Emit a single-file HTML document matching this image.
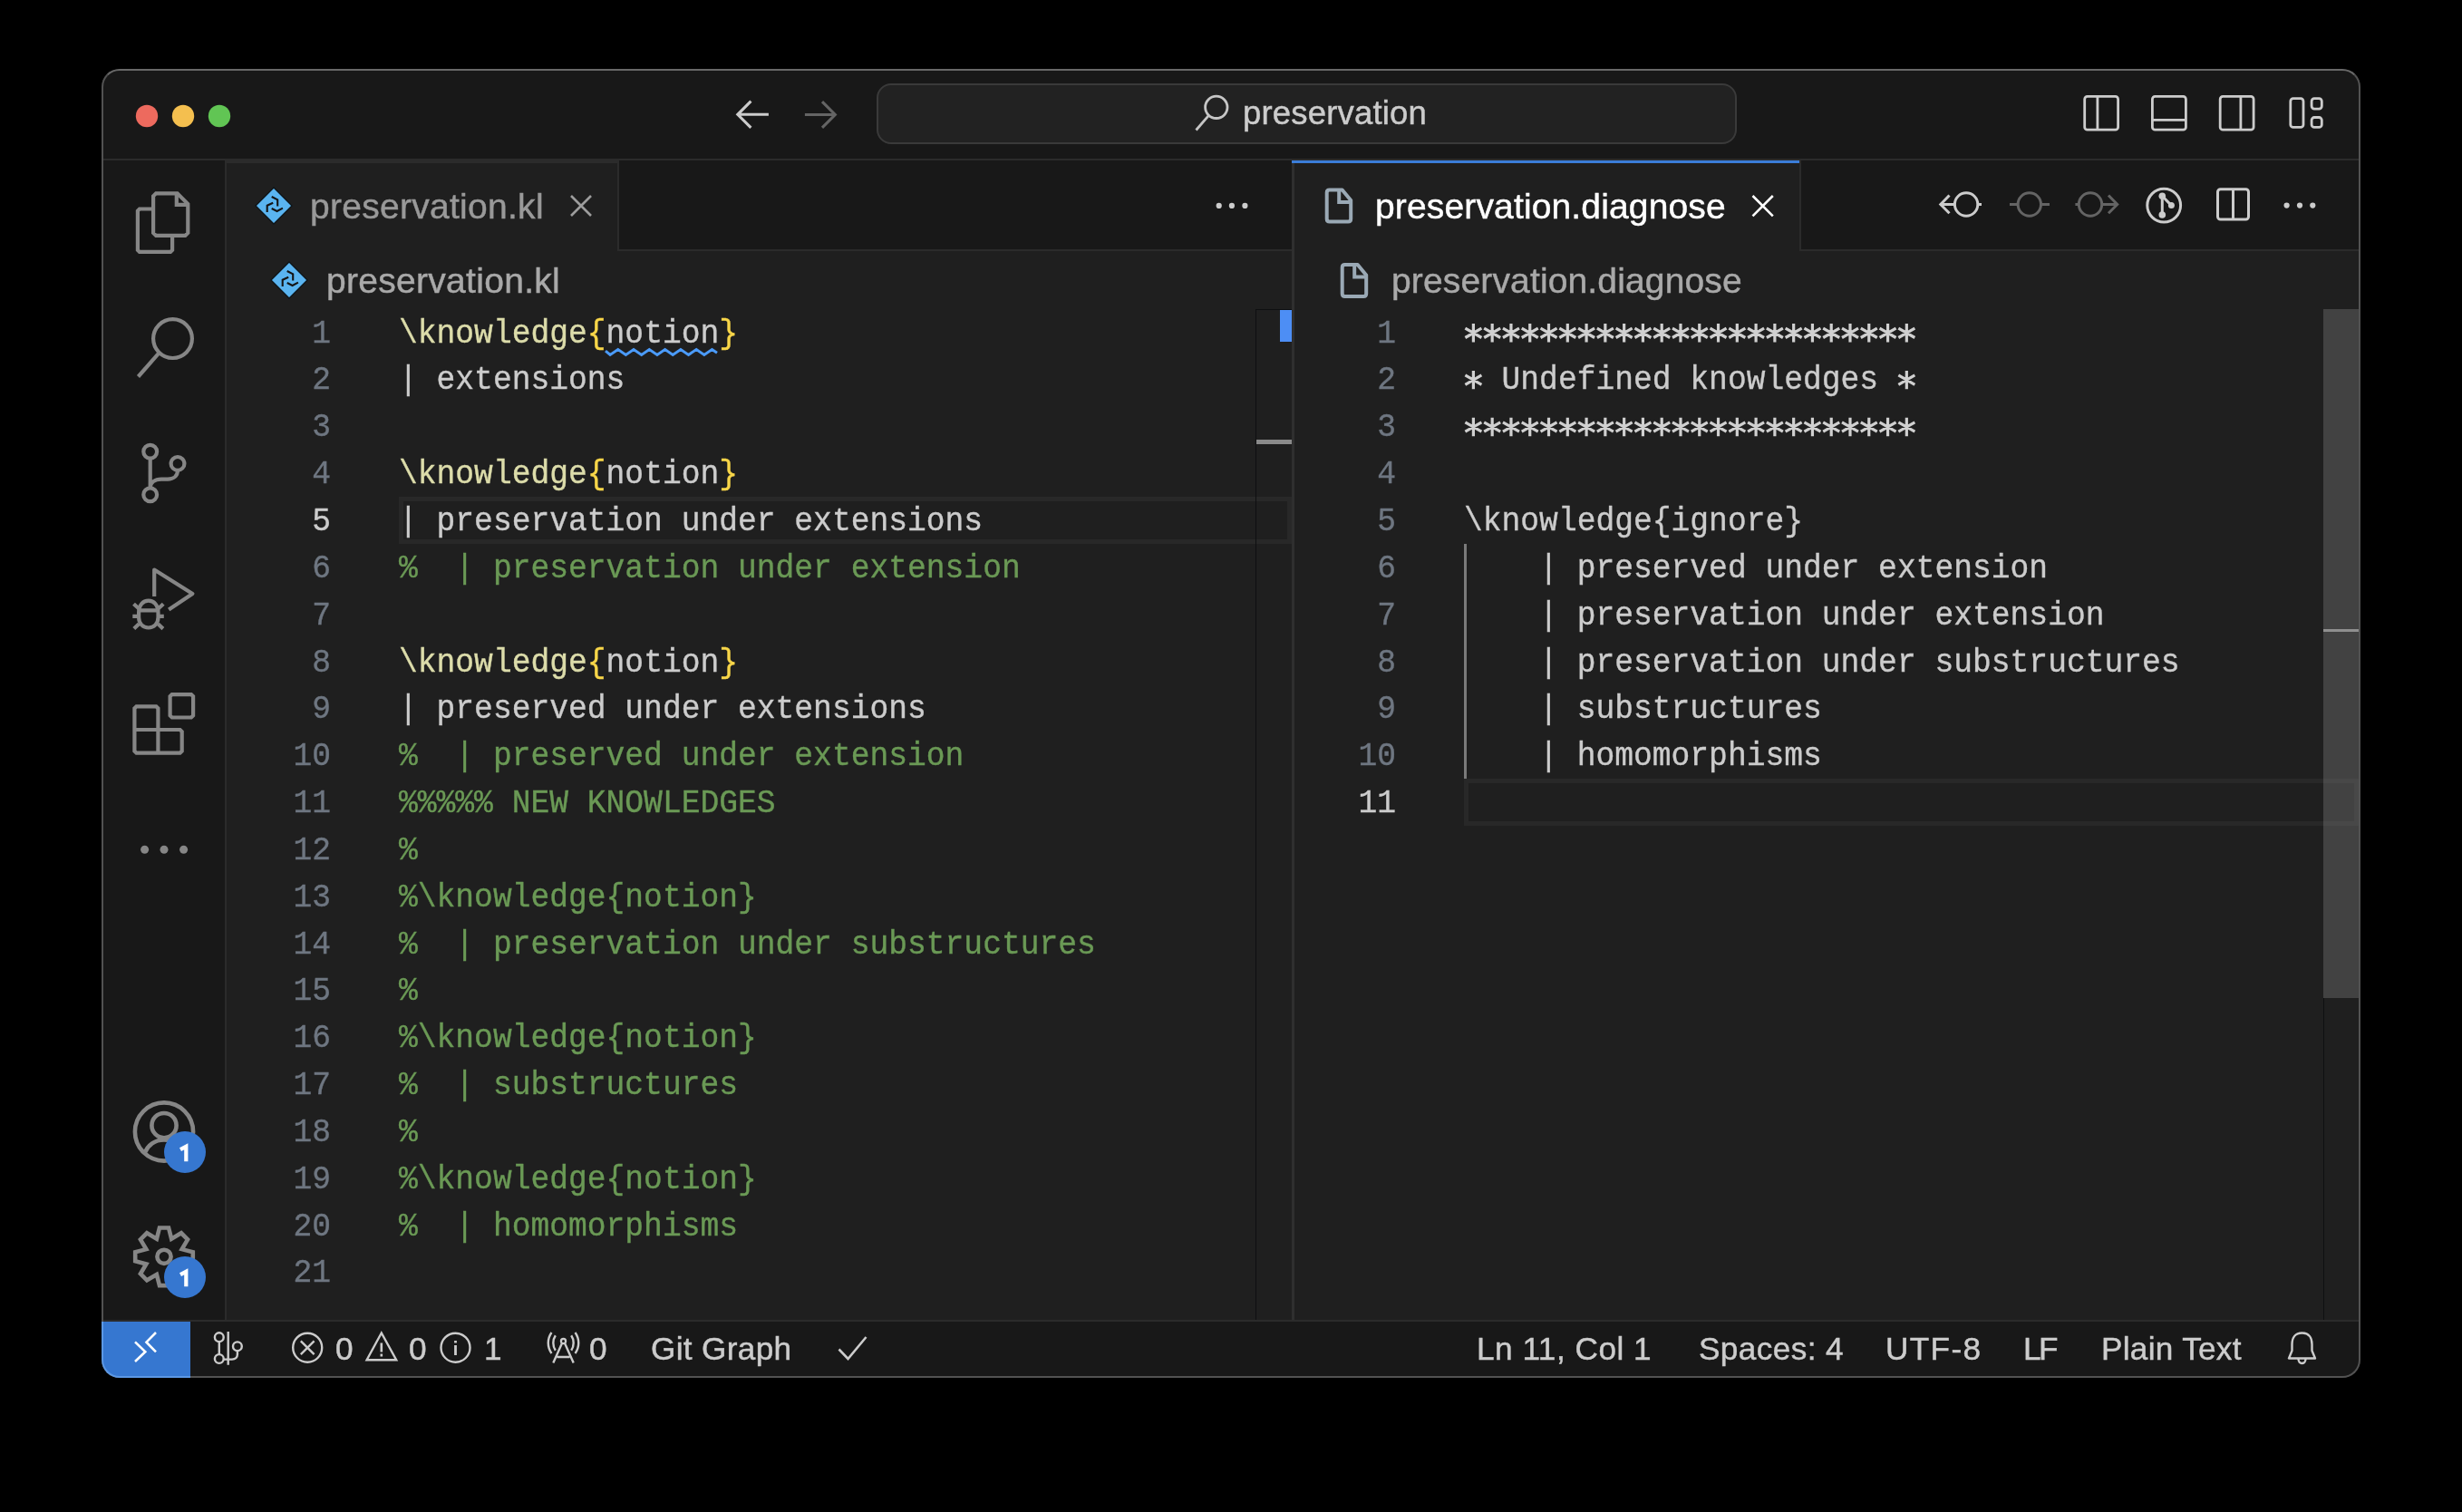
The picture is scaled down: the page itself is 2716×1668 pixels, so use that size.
<!DOCTYPE html>
<html><head><meta charset="utf-8">
<style>
html,body{margin:0;padding:0;background:#000;width:2716px;height:1668px;overflow:hidden;}
body{position:relative;font-family:"Liberation Sans",sans-serif;}
.r{position:absolute;}
.t{position:absolute;white-space:pre;-webkit-text-stroke:0.45px currentColor;}
#win{position:absolute;left:112px;top:76px;width:2492px;height:1444px;border-radius:20px;background:#181818;overflow:hidden;}
#winborder{position:absolute;left:112px;top:76px;width:2488px;height:1440px;border-radius:20px;border:2px solid #525252;border-top-color:#686868;z-index:50;}
.code{position:absolute;white-space:normal;font-family:"Liberation Mono",monospace;font-size:34.63px;transform-origin:0 0;transform:scaleY(1.08);-webkit-text-stroke:0.35px currentColor;}
.code div{height:48.009px;line-height:48.009px;white-space:pre;}
.ln{position:absolute;font-family:"Liberation Mono",monospace;font-size:34.63px;transform-origin:0 0;transform:scaleY(1.08);text-align:right;color:#6e7681;-webkit-text-stroke:0.35px currentColor;}
.ln div{height:48.009px;line-height:48.009px;}
.fn{color:#dcdcaa}.br{color:#f8d649}.tx{color:#cccccc}.cm{color:#6a9955}
.ast{display:inline-block;width:20.78px;text-align:center;}
#ov{position:absolute;left:0;top:0;z-index:60;}
.t,.code,.ln{will-change:transform;}
</style></head>
<body>
<div id="win"></div>
<div class="r" style="left:114px;top:175px;width:2488px;height:2px;background:#2b2b2b;"></div>
<div class="r" style="left:967px;top:92px;width:949px;height:67px;background:#222222;box-sizing:border-box;border:2px solid #3a3a3a;border-radius:16px;"></div>
<div class="r" style="left:248px;top:177px;width:2px;height:1279px;background:#2b2b2b;"></div>
<div class="r" style="left:250px;top:177px;width:1175px;height:98px;background:#181818;"></div>
<div class="r" style="left:250px;top:275px;width:1175px;height:2px;background:#2b2b2b;"></div>
<div class="r" style="left:250px;top:177px;width:431px;height:100px;background:#1f1f1f;"></div>
<div class="r" style="left:681px;top:177px;width:2px;height:100px;background:#2b2b2b;"></div>
<div class="r" style="left:250px;top:177px;width:431px;height:3px;background:#2b2b2b;"></div>
<div class="r" style="left:250px;top:277px;width:1175px;height:1179px;background:#1f1f1f;"></div>
<div class="r" style="left:1425px;top:177px;width:3px;height:1279px;background:#2f2f2f;"></div>
<div class="r" style="left:1428px;top:177px;width:1174px;height:98px;background:#181818;"></div>
<div class="r" style="left:1428px;top:275px;width:1174px;height:2px;background:#2b2b2b;"></div>
<div class="r" style="left:1428px;top:177px;width:557px;height:100px;background:#1f1f1f;"></div>
<div class="r" style="left:1425px;top:177px;width:560px;height:3px;background:#3b7dd8;"></div>
<div class="r" style="left:1985px;top:177px;width:2px;height:100px;background:#2b2b2b;"></div>
<div class="r" style="left:1428px;top:277px;width:1174px;height:1179px;background:#1f1f1f;"></div>
<div class="r" style="left:440px;top:548px;width:985px;height:52px;background:transparent;box-sizing:border-box;border:5px solid #282828;"></div>
<div class="r" style="left:1615px;top:859px;width:987px;height:52px;background:transparent;box-sizing:border-box;border:5px solid #282828;"></div>
<div class="r" style="left:1615px;top:600px;width:3px;height:259px;background:#7a7a7a;"></div>
<div class="r" style="left:1385px;top:341px;width:1px;height:1115px;background:#0e0f11;"></div>
<div class="r" style="left:1385px;top:341px;width:40px;height:1px;background:#0e0f11;"></div>
<div class="r" style="left:1412px;top:342px;width:13px;height:35px;background:#4d8ef5;"></div>
<div class="r" style="left:1386px;top:485px;width:39px;height:5px;background:#8a8a8a;"></div>
<div class="r" style="left:2563px;top:1101px;width:1px;height:355px;background:#0e0f11;"></div>
<div class="r" style="left:2563px;top:341px;width:39px;height:760px;background:rgba(121,121,121,0.4);"></div>
<div class="r" style="left:2563px;top:694px;width:39px;height:3px;background:#8f8f8f;"></div>
<div class="r" style="left:114px;top:1456px;width:2488px;height:2px;background:#2b2b2b;"></div>
<div class="r" style="left:114px;top:1458px;width:2488px;height:60px;background:#181818;border-bottom-left-radius:18px;border-bottom-right-radius:18px;"></div>
<div id="winborder"></div>
<div class="r" style="left:112px;top:1458px;width:98px;height:62px;background:#3677d0;box-sizing:border-box;border-left:2px solid #5c98e4;border-bottom:2px solid #5c98e4;border-bottom-left-radius:20px;z-index:55;"></div>
<div class="ln" style="left:265px;top:341.6px;width:100.00px;"><div>1</div><div>2</div><div>3</div><div>4</div><div style="color:#cccccc">5</div><div>6</div><div>7</div><div>8</div><div>9</div><div>10</div><div>11</div><div>12</div><div>13</div><div>14</div><div>15</div><div>16</div><div>17</div><div>18</div><div>19</div><div>20</div><div>21</div></div>
<div class="code" style="left:440px;top:341.9px;"><div><span class="fn">\knowledge</span><span class="br">{</span><span class="tx">notion</span><span class="br">}</span></div><div><span class="tx">| extensions</span></div><div> </div><div><span class="fn">\knowledge</span><span class="br">{</span><span class="tx">notion</span><span class="br">}</span></div><div><span class="tx">| preservation under extensions</span></div><div><span class="cm">%  | preservation under extension</span></div><div> </div><div><span class="fn">\knowledge</span><span class="br">{</span><span class="tx">notion</span><span class="br">}</span></div><div><span class="tx">| preserved under extensions</span></div><div><span class="cm">%  | preserved under extension</span></div><div><span class="cm">%%%%% NEW KNOWLEDGES</span></div><div><span class="cm">%</span></div><div><span class="cm">%\knowledge{notion}</span></div><div><span class="cm">%  | preservation under substructures</span></div><div><span class="cm">%</span></div><div><span class="cm">%\knowledge{notion}</span></div><div><span class="cm">%  | substructures</span></div><div><span class="cm">%</span></div><div><span class="cm">%\knowledge{notion}</span></div><div><span class="cm">%  | homomorphisms</span></div><div> </div></div>
<div class="ln" style="left:1440px;top:341.6px;width:100.00px;"><div>1</div><div>2</div><div>3</div><div>4</div><div>5</div><div>6</div><div>7</div><div>8</div><div>9</div><div>10</div><div style="color:#cccccc">11</div></div>
<div class="code tx" style="left:1615px;top:341.9px;"><div>                        </div><div>  Undefined knowledges  </div><div>                        </div><div> </div><div>\knowledge{ignore}</div><div>    | preserved under extension</div><div>    | preservation under extension</div><div>    | preservation under substructures</div><div>    | substructures</div><div>    | homomorphisms</div><div> </div></div>
<div class="t" style="left:1371.11px;top:107.10px;font-size:36.50px;line-height:36.50px;letter-spacing:0.177px;color:#cccccc;font-family:"Liberation Sans",sans-serif;font-weight:normal;">preservation</div>
<div class="t" style="left:342.27px;top:207.98px;font-size:39.00px;line-height:39.00px;letter-spacing:0.281px;color:#999999;font-family:"Liberation Sans",sans-serif;font-weight:normal;">preservation.kl</div>
<div class="t" style="left:1517.27px;top:208.18px;font-size:39.00px;line-height:39.00px;letter-spacing:0.146px;color:#ffffff;font-family:"Liberation Sans",sans-serif;font-weight:normal;">preservation.diagnose</div>
<div class="t" style="left:359.73px;top:289.88px;font-size:39.00px;line-height:39.00px;letter-spacing:0.296px;color:#a9a9a9;font-family:"Liberation Sans",sans-serif;font-weight:normal;">preservation.kl</div>
<div class="t" style="left:1534.61px;top:289.88px;font-size:39.00px;line-height:39.00px;letter-spacing:0.146px;color:#a9a9a9;font-family:"Liberation Sans",sans-serif;font-weight:normal;">preservation.diagnose</div>
<div class="t" style="left:369.62px;top:1470.20px;font-size:35.20px;line-height:35.20px;color:#cccccc;">0</div>
<div class="t" style="left:451.43px;top:1470.20px;font-size:35.20px;line-height:35.20px;color:#cccccc;">0</div>
<div class="t" style="left:533.92px;top:1470.20px;font-size:35.20px;line-height:35.20px;color:#cccccc;">1</div>
<div class="t" style="left:650.23px;top:1470.20px;font-size:35.20px;line-height:35.20px;color:#cccccc;">0</div>
<div class="t" style="left:718.13px;top:1470.20px;font-size:35.20px;line-height:35.20px;letter-spacing:0.331px;color:#cccccc;font-family:"Liberation Sans",sans-serif;font-weight:normal;">Git Graph</div>
<div class="t" style="left:1629.35px;top:1470.20px;font-size:35.20px;line-height:35.20px;letter-spacing:0.499px;color:#cccccc;font-family:"Liberation Sans",sans-serif;font-weight:normal;">Ln 11, Col 1</div>
<div class="t" style="left:1873.98px;top:1470.20px;font-size:35.20px;line-height:35.20px;letter-spacing:0.381px;color:#cccccc;font-family:"Liberation Sans",sans-serif;font-weight:normal;">Spaces: 4</div>
<div class="t" style="left:2080.18px;top:1470.20px;font-size:35.20px;line-height:35.20px;letter-spacing:1.346px;color:#cccccc;font-family:"Liberation Sans",sans-serif;font-weight:normal;">UTF-8</div>
<div class="t" style="left:2231.91px;top:1470.20px;font-size:35.20px;line-height:35.20px;letter-spacing:-2.601px;color:#cccccc;font-family:"Liberation Sans",sans-serif;font-weight:normal;">LF</div>
<div class="t" style="left:2317.81px;top:1470.20px;font-size:35.20px;line-height:35.20px;letter-spacing:0.291px;color:#cccccc;font-family:"Liberation Sans",sans-serif;font-weight:normal;">Plain Text</div>
<svg id="ov" width="2716" height="1668" viewBox="0 0 2716 1668" fill="none" stroke-linecap="butt" stroke-linejoin="miter">
<circle cx="162" cy="128" r="12.2" fill="#ed6a5e"/>
<circle cx="202" cy="128" r="12.2" fill="#f4bf4f"/>
<circle cx="242" cy="128" r="12.2" fill="#61c554"/>
<path d="M847.9 126.3H815M828.4 111.7L813.8 126.3L828.4 140.9" stroke="#cccccc" stroke-width="3.1"/>
<path d="M887.9 126.5H921M907 112.2L921.3 126.5L907 140.8" stroke="#646464" stroke-width="3.1"/>
<circle cx="1341.8" cy="118.3" r="12.2" stroke="#c6c6c6" stroke-width="2.8"/><path d="M1333.2 127.6L1319.5 143.5" stroke="#c6c6c6" stroke-width="2.8"/>
<rect x="2299.7" y="106.4" width="36.9" height="36.8" rx="3" stroke="#cccccc" stroke-width="2.8"/><path d="M2313.9 106.4V143.2" stroke="#cccccc" stroke-width="2.8"/>
<rect x="2374.4" y="106.4" width="37" height="36.8" rx="3" stroke="#cccccc" stroke-width="2.8"/><path d="M2374.4 132.4H2411.4" stroke="#cccccc" stroke-width="2.8"/>
<rect x="2449.2" y="106.4" width="36.9" height="36.8" rx="3" stroke="#cccccc" stroke-width="2.8"/><path d="M2471.9 106.4V143.2" stroke="#cccccc" stroke-width="2.8"/>
<rect x="2526.8" y="108.7" width="14.2" height="31.7" rx="3" stroke="#cccccc" stroke-width="2.8"/>
<rect x="2550.1" y="108.7" width="11.2" height="11.4" rx="3" stroke="#cccccc" stroke-width="2.8"/>
<rect x="2550.1" y="129.5" width="11.2" height="10.9" rx="3" stroke="#cccccc" stroke-width="2.8"/>
<path d="M172.1 213.3H195.6L207.3 225V256.9L204.3 259.9H172.1L169.1 256.9V216.3Z" stroke="#868686" stroke-width="4.2"/>
<path d="M194.8 213.3V225.9H207.3" stroke="#868686" stroke-width="4.2"/>
<path d="M169.1 230.5H153.9L151.9 232.5V275.9L153.9 277.9H188.1L190.1 275.9V259.9" stroke="#868686" stroke-width="4.2"/>
<circle cx="190.5" cy="373.6" r="21.4" stroke="#868686" stroke-width="4.2"/><path d="M175.4 389.4L152.5 415.5" stroke="#868686" stroke-width="4.2"/>
<circle cx="165.7" cy="498.2" r="7.4" stroke="#868686" stroke-width="4.2"/><circle cx="196" cy="511.4" r="7.4" stroke="#868686" stroke-width="4.2"/><circle cx="165.7" cy="545.8" r="7.4" stroke="#868686" stroke-width="4.2"/>
<path d="M165.7 505.6V538.4M196 518.8C196 525 191.5 528.6 185 528.6H178C171 528.6 165.7 532 165.7 538.4" stroke="#868686" stroke-width="4.2"/>
<path d="M170.2 658V628.5L212.4 655L186.2 672.6" stroke="#868686" stroke-width="4.2" stroke-linejoin="round"/>
<path d="M153.1 676C153.1 667.5 157.8 662.7 163.8 662.7C169.8 662.7 174.5 667.5 174.5 676V681C174.5 688 169.8 692.5 163.8 692.5C157.8 692.5 153.1 688 153.1 681Z" stroke="#868686" stroke-width="4.2"/>
<path d="M153.1 673.4H174.5M147.5 666.2L153.3 671.5M180.2 666.2L174.5 671.5M146.3 679.9H153.1M174.5 679.9H180.8M147.8 693.6L153.3 688.3M179.9 693.6L174.3 688.3" stroke="#868686" stroke-width="4.2"/>
<path d="M150.5 779.3H172.3L174.4 781.4V805H198.6L200.7 807.1V828.6L198.6 830.7H150.5L148.4 828.6V781.4Z M148.4 805H174.4V830.7" stroke="#868686" stroke-width="4.2"/>
<path d="M189.7 766.1H211L213.1 768.2V789.4L211 791.5H189.7L187.6 789.4V768.2Z" stroke="#868686" stroke-width="4.2"/>
<circle cx="159.6" cy="937.3" r="4.5" fill="#868686"/><circle cx="181" cy="937.3" r="4.5" fill="#868686"/><circle cx="202.6" cy="937.3" r="4.5" fill="#868686"/>
<circle cx="181" cy="1248.5" r="32.1" stroke="#868686" stroke-width="4.6"/><circle cx="181" cy="1241.6" r="13.6" stroke="#868686" stroke-width="4.6"/>
<path d="M159.8 1272C163 1263 171 1257.5 181 1257.5C191 1257.5 199 1263 202.2 1272" stroke="#868686" stroke-width="4.6"/>
<path d="M172.85 1366.62L175.96 1354.50L186.04 1354.50L189.15 1366.62L199.93 1360.25L207.05 1367.37L200.68 1378.15L212.80 1381.26L212.80 1391.34L200.68 1394.45L207.05 1405.23L199.93 1412.35L189.15 1405.98L186.04 1418.10L175.96 1418.10L172.85 1405.98L162.07 1412.35L154.95 1405.23L161.32 1394.45L149.20 1391.34L149.20 1381.26L161.32 1378.15L154.95 1367.37L162.07 1360.25Z" stroke="#868686" stroke-width="4.6" stroke-linejoin="miter" stroke-miterlimit="10"/>
<circle cx="181" cy="1386.3" r="7.6" stroke="#868686" stroke-width="4.6"/>
<circle cx="204" cy="1271" r="23" fill="#3677d0"/><circle cx="204" cy="1409" r="23" fill="#3677d0"/>
<path d="M199.0 1268.2L205.3 1264.8V1281.2M199.0 1406.2L205.3 1402.8V1419.2" stroke="#ffffff" stroke-width="4.2" stroke-linejoin="miter"/>
<path d="M1625.40 357.10V377.50M1616.40 362.10L1634.40 372.50M1616.40 372.50L1634.40 362.10M1646.18 357.10V377.50M1637.18 362.10L1655.18 372.50M1637.18 372.50L1655.18 362.10M1666.96 357.10V377.50M1657.96 362.10L1675.96 372.50M1657.96 372.50L1675.96 362.10M1687.74 357.10V377.50M1678.74 362.10L1696.74 372.50M1678.74 372.50L1696.74 362.10M1708.52 357.10V377.50M1699.52 362.10L1717.52 372.50M1699.52 372.50L1717.52 362.10M1729.30 357.10V377.50M1720.30 362.10L1738.30 372.50M1720.30 372.50L1738.30 362.10M1750.08 357.10V377.50M1741.08 362.10L1759.08 372.50M1741.08 372.50L1759.08 362.10M1770.86 357.10V377.50M1761.86 362.10L1779.86 372.50M1761.86 372.50L1779.86 362.10M1791.64 357.10V377.50M1782.64 362.10L1800.64 372.50M1782.64 372.50L1800.64 362.10M1812.42 357.10V377.50M1803.42 362.10L1821.42 372.50M1803.42 372.50L1821.42 362.10M1833.20 357.10V377.50M1824.20 362.10L1842.20 372.50M1824.20 372.50L1842.20 362.10M1853.98 357.10V377.50M1844.98 362.10L1862.98 372.50M1844.98 372.50L1862.98 362.10M1874.76 357.10V377.50M1865.76 362.10L1883.76 372.50M1865.76 372.50L1883.76 362.10M1895.54 357.10V377.50M1886.54 362.10L1904.54 372.50M1886.54 372.50L1904.54 362.10M1916.32 357.10V377.50M1907.32 362.10L1925.32 372.50M1907.32 372.50L1925.32 362.10M1937.10 357.10V377.50M1928.10 362.10L1946.10 372.50M1928.10 372.50L1946.10 362.10M1957.88 357.10V377.50M1948.88 362.10L1966.88 372.50M1948.88 372.50L1966.88 362.10M1978.66 357.10V377.50M1969.66 362.10L1987.66 372.50M1969.66 372.50L1987.66 362.10M1999.44 357.10V377.50M1990.44 362.10L2008.44 372.50M1990.44 372.50L2008.44 362.10M2020.22 357.10V377.50M2011.22 362.10L2029.22 372.50M2011.22 372.50L2029.22 362.10M2041.00 357.10V377.50M2032.00 362.10L2050.00 372.50M2032.00 372.50L2050.00 362.10M2061.78 357.10V377.50M2052.78 362.10L2070.78 372.50M2052.78 372.50L2070.78 362.10M2082.56 357.10V377.50M2073.56 362.10L2091.56 372.50M2073.56 372.50L2091.56 362.10M2103.34 357.10V377.50M2094.34 362.10L2112.34 372.50M2094.34 372.50L2112.34 362.10M1625.40 408.95V429.35M1616.40 413.95L1634.40 424.35M1616.40 424.35L1634.40 413.95M2103.34 408.95V429.35M2094.34 413.95L2112.34 424.35M2094.34 424.35L2112.34 413.95M1625.40 460.80V481.20M1616.40 465.80L1634.40 476.20M1616.40 476.20L1634.40 465.80M1646.18 460.80V481.20M1637.18 465.80L1655.18 476.20M1637.18 476.20L1655.18 465.80M1666.96 460.80V481.20M1657.96 465.80L1675.96 476.20M1657.96 476.20L1675.96 465.80M1687.74 460.80V481.20M1678.74 465.80L1696.74 476.20M1678.74 476.20L1696.74 465.80M1708.52 460.80V481.20M1699.52 465.80L1717.52 476.20M1699.52 476.20L1717.52 465.80M1729.30 460.80V481.20M1720.30 465.80L1738.30 476.20M1720.30 476.20L1738.30 465.80M1750.08 460.80V481.20M1741.08 465.80L1759.08 476.20M1741.08 476.20L1759.08 465.80M1770.86 460.80V481.20M1761.86 465.80L1779.86 476.20M1761.86 476.20L1779.86 465.80M1791.64 460.80V481.20M1782.64 465.80L1800.64 476.20M1782.64 476.20L1800.64 465.80M1812.42 460.80V481.20M1803.42 465.80L1821.42 476.20M1803.42 476.20L1821.42 465.80M1833.20 460.80V481.20M1824.20 465.80L1842.20 476.20M1824.20 476.20L1842.20 465.80M1853.98 460.80V481.20M1844.98 465.80L1862.98 476.20M1844.98 476.20L1862.98 465.80M1874.76 460.80V481.20M1865.76 465.80L1883.76 476.20M1865.76 476.20L1883.76 465.80M1895.54 460.80V481.20M1886.54 465.80L1904.54 476.20M1886.54 476.20L1904.54 465.80M1916.32 460.80V481.20M1907.32 465.80L1925.32 476.20M1907.32 476.20L1925.32 465.80M1937.10 460.80V481.20M1928.10 465.80L1946.10 476.20M1928.10 476.20L1946.10 465.80M1957.88 460.80V481.20M1948.88 465.80L1966.88 476.20M1948.88 476.20L1966.88 465.80M1978.66 460.80V481.20M1969.66 465.80L1987.66 476.20M1969.66 476.20L1987.66 465.80M1999.44 460.80V481.20M1990.44 465.80L2008.44 476.20M1990.44 476.20L2008.44 465.80M2020.22 460.80V481.20M2011.22 465.80L2029.22 476.20M2011.22 476.20L2029.22 465.80M2041.00 460.80V481.20M2032.00 465.80L2050.00 476.20M2032.00 476.20L2050.00 465.80M2061.78 460.80V481.20M2052.78 465.80L2070.78 476.20M2052.78 476.20L2070.78 465.80M2082.56 460.80V481.20M2073.56 465.80L2091.56 476.20M2073.56 476.20L2091.56 465.80M2103.34 460.80V481.20M2094.34 465.80L2112.34 476.20M2094.34 476.20L2112.34 465.80" stroke="#d0d0d0" stroke-width="3.2"/>
<path d="M282.0 227.0L302.0 207.0L322.0 227.0L302.0 247.0Z" fill="#5ab4f0" stroke="#0d1418" stroke-width="1.3"/><path d="M299.7 217.0L306.2 220.4V227.4 M301.2 223.7L294.7 226.7V234.0 M299.7 230.0L305.6 233.0L311.9 229.6" stroke="#141414" stroke-width="2.1"/>
<path d="M299.0 309.0L319.0 289.0L339.0 309.0L319.0 329.0Z" fill="#5ab4f0" stroke="#0d1418" stroke-width="1.3"/><path d="M316.7 299.0L323.2 302.4V309.4 M318.2 305.7L311.7 308.7V316.0 M316.7 312.0L322.6 315.0L328.9 311.6" stroke="#141414" stroke-width="2.1"/>
<path d="M1466.7 209.6H1480.7L1490.2 221.1V241.6Q1490.2 244.6 1487.2 244.6H1466.7Q1463.7 244.6 1463.7 241.6V212.6Q1463.7 209.6 1466.7 209.6Z" stroke="#9aa9b5" stroke-width="4" stroke-linejoin="round"/><path d="M1477.2 209.6V223.1H1490.2" stroke="#9aa9b5" stroke-width="4"/>
<path d="M1483.7 292.0H1497.7L1507.2 303.5V324.0Q1507.2 327.0 1504.2 327.0H1483.7Q1480.7 327.0 1480.7 324.0V295.0Q1480.7 292.0 1483.7 292.0Z" stroke="#9aa9b5" stroke-width="4" stroke-linejoin="round"/><path d="M1494.2 292.0V305.5H1507.2" stroke="#9aa9b5" stroke-width="4"/>
<path d="M630 216L652 238M652 216L630 238" stroke="#9d9d9d" stroke-width="2.6"/>
<path d="M1933.5 216L1955.8 238.3M1955.8 216L1933.5 238.3" stroke="#ffffff" stroke-width="2.6"/>
<circle cx="1344.7" cy="226.9" r="3.1" fill="#cccccc"/><circle cx="1358.9" cy="226.9" r="3.1" fill="#cccccc"/><circle cx="1373.4" cy="226.9" r="3.1" fill="#cccccc"/>
<circle cx="2169.1" cy="225.5" r="12.7" stroke="#cccccc" stroke-width="3"/><path d="M2156.4 225.5H2141M2150.5 215.5L2140.8 225.5L2150.5 235.3M2181.8 225.5H2186" stroke="#cccccc" stroke-width="3"/>
<circle cx="2238.8" cy="225.5" r="12.7" stroke="#646464" stroke-width="3"/><path d="M2217 225.5H2226.1M2251.5 225.5H2261" stroke="#646464" stroke-width="3"/>
<circle cx="2306" cy="225.5" r="12.7" stroke="#646464" stroke-width="3"/><path d="M2289.4 225.5H2293.3M2318.7 225.5H2335M2326 215.5L2335.7 225.5L2326 235.3" stroke="#646464" stroke-width="3"/>
<circle cx="2387.2" cy="226.6" r="18.4" stroke="#cccccc" stroke-width="3"/><path d="M2385.3 216.2V237M2385.3 216.2L2395.4 226.6" stroke="#cccccc" stroke-width="3"/><circle cx="2385.3" cy="216.2" r="3.8" fill="#cccccc"/><circle cx="2395.4" cy="226.6" r="3.5" fill="#cccccc"/><circle cx="2385.3" cy="237" r="3.8" fill="#cccccc"/>
<rect x="2446.5" y="208.8" width="34" height="33.3" rx="3" stroke="#cccccc" stroke-width="3"/><path d="M2463.5 208.8V242.1" stroke="#cccccc" stroke-width="3"/>
<circle cx="2522.6" cy="226.6" r="3.1" fill="#cccccc"/><circle cx="2537" cy="226.6" r="3.1" fill="#cccccc"/><circle cx="2551.3" cy="226.6" r="3.1" fill="#cccccc"/>
<path d="M668 387.2L673.1 391.4L681.75 385.60L690.39 391.40L699.03 385.60L707.68 391.40L716.32 385.60L724.97 391.40L733.61 385.60L742.26 391.40L750.90 385.60L759.55 391.40L768.19 385.60L776.84 391.40L785.48 385.60L791 389.30" stroke="#4b9bfa" stroke-width="3"/>
<path d="M149 1480.4L160.3 1491.2L149 1502M172 1470L161.5 1480.7L172 1491.4" stroke="#ffffff" stroke-width="2.6"/>
<circle cx="241.8" cy="1475.2" r="4.9" stroke="#cccccc" stroke-width="2.4"/><circle cx="241.8" cy="1499" r="4.9" stroke="#cccccc" stroke-width="2.4"/><circle cx="261.9" cy="1485.3" r="4.9" stroke="#cccccc" stroke-width="2.4"/>
<path d="M241.8 1480.1V1494.1M251.7 1469.1V1505.7M261.9 1490.2V1494C261.9 1497.5 259.5 1499.6 256 1499.6H246.7" stroke="#cccccc" stroke-width="2.4"/>
<circle cx="339.2" cy="1486.7" r="16" stroke="#cccccc" stroke-width="2.4"/><path d="M331.8 1479.3L346.6 1494.1M346.6 1479.3L331.8 1494.1" stroke="#cccccc" stroke-width="2.4"/>
<path d="M420.8 1470.5L404.6 1500.2H437.2Z" stroke="#cccccc" stroke-width="2.4" stroke-linejoin="miter"/><path d="M420.8 1481.6V1491.5M420.8 1493.5V1496.5" stroke="#cccccc" stroke-width="2.6"/>
<circle cx="502.5" cy="1486.7" r="16" stroke="#cccccc" stroke-width="2.4"/><path d="M502.5 1484V1495M502.5 1479V1481.5" stroke="#cccccc" stroke-width="2.8"/>
<circle cx="621.5" cy="1479.5" r="2.6" stroke="#cccccc" stroke-width="2.2"/><path d="M619.8 1482.2L610.3 1503.5M623.2 1482.2L632.7 1503.5M614.5 1497H628.5" stroke="#cccccc" stroke-width="2.4"/>
<path d="M612.8 1473.2C609.5 1478 609.5 1485 612.8 1489.8M630.2 1473.2C633.5 1478 633.5 1485 630.2 1489.8M608.5 1470C603.5 1477 603.5 1486 608.5 1493M634.5 1470C639.5 1477 639.5 1486 634.5 1493" stroke="#cccccc" stroke-width="2.4"/>
<path d="M925.5 1488.5L935.5 1499L955.5 1475" stroke="#cccccc" stroke-width="2.6"/>
<path d="M2539.5 1470.5C2532 1470.5 2528.5 1476 2528.5 1483V1490L2525 1498.5H2554L2550.5 1490V1483C2550.5 1476 2547 1470.5 2539.5 1470.5Z" stroke="#cccccc" stroke-width="2.4" stroke-linejoin="round"/><path d="M2535.5 1499C2535.5 1502 2537.3 1504 2539.5 1504C2541.7 1504 2543.5 1502 2543.5 1499" stroke="#cccccc" stroke-width="2.4"/>
</svg>
</body></html>
